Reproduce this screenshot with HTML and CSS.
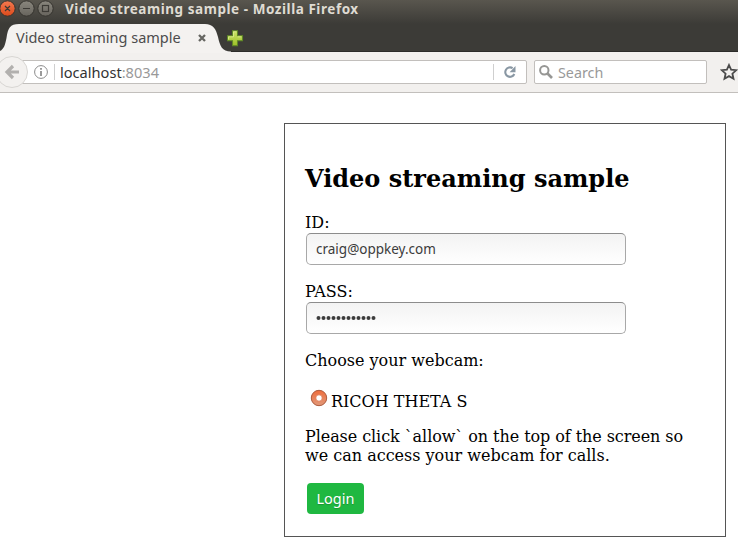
FILE: index.html
```html
<!DOCTYPE html>
<html lang="en">
<head>
<meta charset="utf-8">
<title>Video streaming sample</title>
<link rel="stylesheet" href="styles.css">
</head>
<body>
<header class="chrome">
  <div class="titlebar">
    <svg class="window-buttons" width="54" height="18" viewBox="0 0 54 18">
      <defs>
        <linearGradient id="close" x2="0" y2="1"><stop stop-color="#f47a50"/><stop offset="1" stop-color="#dc4a1b"/></linearGradient>
        <linearGradient id="grey" x2="0" y2="1"><stop stop-color="#8a877e"/><stop offset="1" stop-color="#67645d"/></linearGradient>
      </defs>
      <g stroke="#35332e">
        <circle cx="7.5" cy="8.5" r="7.7" fill="url(#close)"/>
        <circle cx="26.5" cy="8.5" r="7.7" fill="url(#grey)"/>
        <circle cx="45.5" cy="8.5" r="7.7" fill="url(#grey)"/>
      </g>
      <g fill="none" stroke="#3c3a35" stroke-width="1.2">
        <path d="M5 6l5 5M10 6l-5 5M23 8.5h7"/>
        <rect x="42.500" y="5.500" width="6" height="6"/>
      </g>
    </svg>
    <span class="window-title">Video streaming sample - Mozilla Firefox</span>
  </div>
  <div class="tabstrip">
    <div class="tab">
      <svg class="tab-shape" width="236" height="29" viewBox="0 0 236 29"><path d="M0 27C4 25 5 21 6.500 14C8 4 10 0 19 0H205C213 0 216 5 218 13C220 22 222 27.500 231 27.500V29H0Z" fill="#f4f2f0"/></svg>
      <span class="tab-title">Video streaming sample</span>
      <svg class="tab-close" width="8" height="8" viewBox="0 0 8 8"><path d="M1 1l6 6M7 1L1 7" stroke="#666662" stroke-width="2.300"/></svg>
    </div>
    <svg class="new-tab" width="17" height="17" viewBox="0 0 17 17">
      <defs><linearGradient id="plus" x2="0" y2="1"><stop stop-color="#cde56b"/><stop offset="1" stop-color="#9cbf27"/></linearGradient></defs>
      <path d="M5.500 .8h5v5h5v5h-5v5h-5v-5h-5v-5h5Z" fill="url(#plus)" stroke="#5e8726" stroke-width="1.100"/>
      <path d="M6.500 6.800V1.800h3M1.500 9.500V6.800h5M10.500 6.800h4" fill="none" stroke="#e2f29b" stroke-width=".7"/>
    </svg>
  </div>
  <nav class="navbar">
    <svg class="back" width="28" height="34" viewBox="0 0 28 34"><circle cx="12" cy="17" r="15.500" fill="#f3f1ef" stroke="#d8d6d3"/><path d="M13 11l-6 6 6 6M7 17h12" fill="none" stroke="#b2b0ae" stroke-width="3.200"/></svg>
    <div class="urlbar">
      <svg class="info" width="14" height="14" viewBox="0 0 14 14"><circle cx="7" cy="7" r="6.400" fill="none" stroke="#8b8b8b"/><path d="M7 6v5M7 3v1.700" stroke="#808080" stroke-width="1.600"/></svg>
      <span class="divider"></span>
      <span class="host">localhost<span class="port">:8034</span></span>
      <span class="divider reload-divider"></span>
      <svg class="reload" width="14" height="14" viewBox="0 0 14 14"><path d="M11.300 9A4.700 4.700 0 1 1 9.600 3.200" fill="none" stroke="#8997a3" stroke-width="2.100"/><path d="M12.500 1v6.200H6.600Z" fill="#8997a3"/></svg>
    </div>
    <div class="search">
      <svg width="14" height="14" viewBox="0 0 14 14"><circle cx="5.300" cy="5.300" r="4.200" fill="none" stroke="#969694" stroke-width="2"/><path d="M8.500 8.500l4.500 4.500" stroke="#969694" stroke-width="2.600"/></svg>
      <span>Search</span>
    </div>
    <svg class="star" width="18" height="18" viewBox="0 0 18 18"><path d="M9 2l2.100 4.700 5.100.5-3.800 3.500 1.100 5L9 13.100l-4.500 2.600 1.100-5L1.800 7.200l5.100-.5Z" fill="none" stroke="#4b4b4b" stroke-width="1.800"/></svg>
  </nav>
</header>
<main class="card">
  <h2>Video streaming sample</h2>
  <label class="field"><span>ID:</span><input type="text" value="craig@oppkey.com"></label>
  <label class="field"><span>PASS:</span><span class="mask"><svg width="62" height="8" viewBox="0 0 62 8"><path d="M2.500 4h56" fill="none" stroke="#3c3c3c" stroke-width="4" stroke-linecap="round" stroke-dasharray="0 5"/></svg></span></label>
  <p class="choose">Choose your webcam:</p>
  <div class="option">
    <svg width="18" height="18" viewBox="0 0 18 18"><defs><linearGradient id="radio" x2="0" y2="1"><stop stop-color="#ef6d3c"/><stop offset="1" stop-color="#e1997a"/></linearGradient></defs><circle cx="9" cy="9" r="7.700" fill="url(#radio)" stroke="#ad5a3d"/><circle cx="9" cy="9" r="3.200" fill="#fff" stroke="#d96c43" stroke-width=".7"/></svg>
    <span>RICOH THETA S</span>
  </div>
  <p class="notice"><span class="tight">Please click `allow` on the top of the screen so</span> we can access your webcam for calls.</p>
  <button class="login" type="button">Login</button>
</main>
</body>
</html>
```
FILE: styles.css
```css
* { box-sizing: border-box; }
body {
  margin: 0;
  background: #fff;
  color: #000;
  font: 16px/19px "DejaVu Serif", serif;
  overflow: hidden;
}
svg { display: block; flex: none; }
.chrome {
  font-family: "Noto Sans", sans-serif;
  background: linear-gradient(#59564e, #3c3b37 24px);
}
.titlebar { display: flex; height: 18px; align-items: center; }
.window-title {
  margin-left: 11px;
  color: #dfdbd2;
  font-size: 13.5px;
  font-weight: 700;
  letter-spacing: .55px;
  line-height: 18px;
  white-space: nowrap;
}
.tabstrip {
  display: flex;
  height: 34px;
  padding-top: 6px;
  border-bottom: 1px solid #2c2b29;
}
.tab {
  position: relative;
  display: flex;
  align-items: center;
  width: 227px;
  height: 28px;
  padding-left: 16px;
}
.tab-shape { position: absolute; left: 0; top: 0; }
.tab-title {
  position: relative;
  width: 182px;
  padding-bottom: 1px;
  color: #4c4c4c;
  font-size: 14.5px;
  white-space: nowrap;
}
.tab-close { position: relative; }
.new-tab { margin-top: 6px; }
.navbar {
  display: flex;
  align-items: center;
  height: 41px;
  background: #f2f0ee;
  border-bottom: 1px solid #c2bfbc;
}
.back { position: relative; }
.urlbar {
  display: flex;
  align-items: center;
  width: 517px;
  height: 24px;
  margin-left: -18px;
  padding-left: 23px;
  background: #fff;
  border: 1px solid #c2bfbc;
  border-radius: 2px;
}
.divider { width: 1px; height: 16px; margin-left: 6px; background: #cfcfcf; }
.host { width: 433px; margin-left: 5px; color: #333; font-size: 14.6px; }
.port { color: #999; }
.reload-divider { margin-left: 0; }
.reload { margin-left: 9px; }
.search {
  display: flex;
  align-items: center;
  width: 173px;
  height: 24px;
  margin-left: 7px;
  padding-left: 4px;
  gap: 5px;
  color: #999;
  font-size: 14.3px;
  background: #fff;
  border: 1px solid #c2bfbc;
  border-radius: 2px;
}
.star { margin-left: 13px; }
.card {
  width: 442px;
  height: 414px;
  margin: 30px 0 0 284px;
  padding: 20px;
  border: 1px solid #555;
}
h2 {
  margin: 20px 0;
  font: 700 24px/29px "DejaVu Serif", serif;
  white-space: nowrap;
}
.field { display: block; margin-bottom: 17px; }
.field > span:first-child { display: block; height: 20px; }
.field input, .mask {
  display: flex;
  align-items: center;
  width: 320px;
  height: 32px;
  margin-left: 1px;
  padding: 0 9px;
  border: 1px solid #a8a8a8;
  border-top-color: #8c8c8c;
  border-radius: 5px;
  background: linear-gradient(#f3f3f3, #fff);
  color: #3c3c3c;
  font: 13.5px "Noto Sans", sans-serif;
}
p { margin: 0; }
.choose { height: 19px; }
.option { display: flex; align-items: flex-start; margin: 19px 0 16px 5px; gap: 3px; }
.option span { padding-top: 3px; }
.notice { width: 400px; }
.tight { letter-spacing: -.07px; margin-right: 12px; }
.login {
  display: block;
  width: 57px;
  height: 31px;
  margin: 18px 0 0 2px;
  padding: 0;
  border: 0;
  border-radius: 4px;
  background: #1fb841;
  color: #fff;
  font: 14.5px/29px "Noto Sans", sans-serif;
  text-shadow: 0 1px 1px rgba(0, 0, 0, .2);
}
```
